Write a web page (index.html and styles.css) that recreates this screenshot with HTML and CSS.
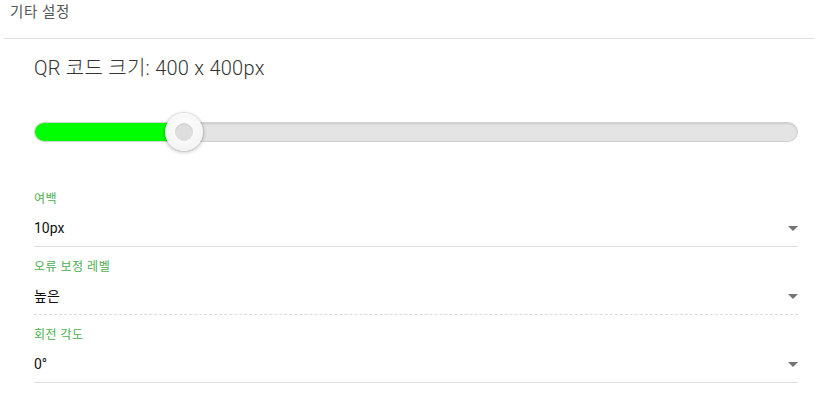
FILE: index.html
```html
<!DOCTYPE html>
<html lang="ko">
<head>
<meta charset="utf-8">
<link rel="stylesheet" href="styles.css">
</head>
<body>
<div class="panel">
  <div class="panel-header">기타 설정</div>
  <div class="panel-body">
    <h2 class="size-title">QR 코드 크기: 400 x 400px</h2>
    <div class="slider">
      <div class="track">
        <div class="fill" style="width: 150px;"></div>
      </div>
      <div class="thumb" style="left: 150px;"><span class="thumb-dot"></span></div>
    </div>
    <div class="field">
      <div class="field-label">여백</div>
      <div class="field-value"><span>10px</span><span class="caret"></span></div>
    </div>
    <div class="field dashed">
      <div class="field-label">오류 보정 레벨</div>
      <div class="field-value"><span>높은</span><span class="caret"></span></div>
    </div>
    <div class="field">
      <div class="field-label">회전 각도</div>
      <div class="field-value"><span>0°</span><span class="caret"></span></div>
    </div>
  </div>
</div>
</body>
</html>
```
FILE: styles.css
```css
html, body {
  margin: 0;
  padding: 0;
  background: #fff;
}
body {
  font-family: Roboto, "Noto Sans CJK KR", sans-serif;
  color: #222;
}
.panel {
  width: 811px;
  margin-left: 4px;
}
.panel-header {
  height: 39px;
  box-sizing: border-box;
  padding: 3px 0 0 6px;
  font-size: 14.5px;
  line-height: 20px;
  letter-spacing: 0.6px;
  color: #555;
  border-bottom: 1px solid #e0e0e0;
}
.panel-body {
  padding: 0 17px 0 30px;
}
.size-title {
  margin: 15px 0 0 0;
  font-size: 20px;
  line-height: 28px;
  font-weight: 300;
  letter-spacing: 0.25px;
  color: #333;
}
.slider {
  position: relative;
  height: 40px;
  margin-top: 30px;
  margin-bottom: 27px;
  display: flex;
  align-items: center;
}
.track {
  flex: 1;
  height: 20px;
  box-sizing: border-box;
  border-radius: 10px;
  background: #e4e4e4;
  border: 1px solid #d2d2d2;
  box-shadow: inset 0 1px 2px rgba(0,0,0,0.12);
  overflow: hidden;
  display: flex;
}
.fill {
  height: 100%;
  background: #00ff00;
  border-radius: 10px 0 0 10px;
  margin: -1px 0 -1px -1px;
  padding: 1px 0;
}
.thumb {
  position: absolute;
  top: 1px;
  width: 38px;
  height: 38px;
  margin-left: -19px;
  border-radius: 50%;
  background: radial-gradient(circle at 50% 40%, #ffffff 0%, #f6f6f6 60%, #ececec 100%);
  box-shadow: 0 1px 4px rgba(0,0,0,0.3), 0 0 0 1px rgba(0,0,0,0.06);
  display: flex;
  align-items: center;
  justify-content: center;
}
.thumb-dot {
  width: 18px;
  height: 18px;
  border-radius: 50%;
  background: #dedede;
  box-shadow: inset 0 1px 2px rgba(0,0,0,0.08);
}
.field {
  padding: 12px 0 8px 0;
  border-bottom: 1px solid #e0e0e0;
}
.field.dashed {
  border-bottom: 1px dashed #dcdcdc;
}
.field-label {
  font-size: 12px;
  line-height: 16px;
  letter-spacing: 0.5px;
  color: #4caf50;
}
.field-value {
  margin-top: 11px;
  font-size: 14px;
  line-height: 20px;
  color: #111;
  display: flex;
  align-items: center;
  justify-content: space-between;
}
.caret {
  width: 0;
  height: 0;
  border-left: 5px solid transparent;
  border-right: 5px solid transparent;
  border-top: 5px solid #757575;
}
```
